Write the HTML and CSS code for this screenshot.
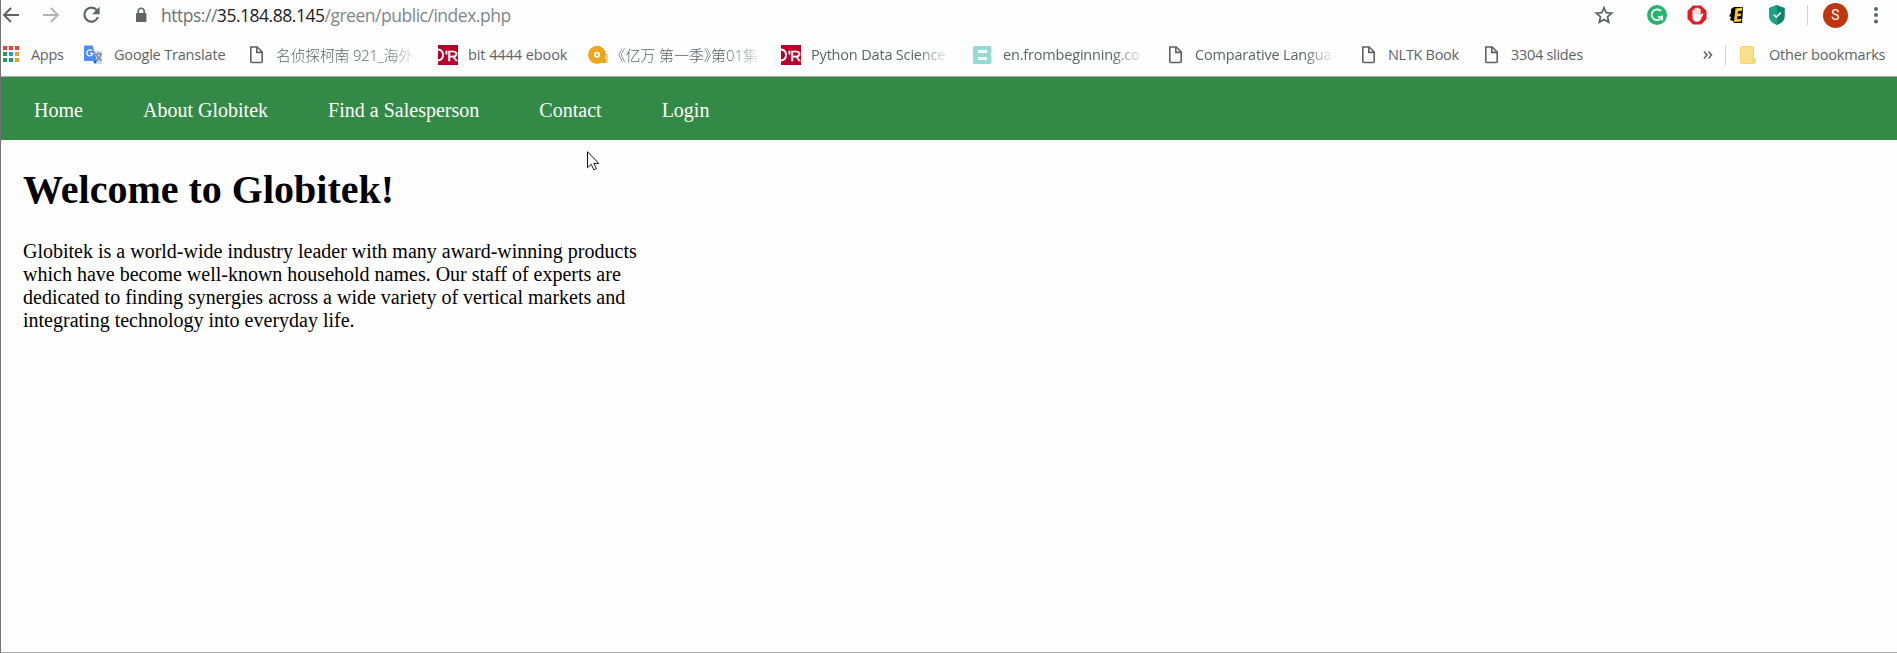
FILE: index.html
```html
<!DOCTYPE html>
<html lang="en">
<head>
<meta charset="utf-8">
<title>Globitek</title>
<link rel="stylesheet" href="styles.css">
</head>
<body>
<svg class="defs" width="0" height="0">
  <symbol id="doc" viewBox="0 0 20 20"><path d="M4.8 2h6.4l5 5v9.5q0 1-1 1H5.8q-1 0-1-1z" fill="none" stroke="#5f6062" stroke-width="1.6"/><path d="M10.8 2v5.4h5.4" fill="none" stroke="#5f6062" stroke-width="1.6"/></symbol>
</svg>
<div class="window">
  <header class="toolbar">
    <svg class="ic back" viewBox="0 0 20 20"><path d="M19 10H4M11 3L4 10l7 7" fill="none" stroke="#5f6368" stroke-width="2"/></svg>
    <svg class="ic forward" viewBox="0 0 20 20"><path d="M2 10h15M10 3l7 7-7 7" fill="none" stroke="#b4b4b4" stroke-width="1.8"/></svg>
    <svg class="ic reload" viewBox="0 0 20 20"><path d="M15.9 5.3A7 7 0 1 0 17 12" fill="none" stroke="#5f6368" stroke-width="2.2"/><path d="M18.6 1.8v7.4h-7.4z" fill="#5f6368"/></svg>
    <svg class="ic lock" viewBox="0 0 20 20"><rect x="5" y="8" width="10.4" height="9" rx="1" fill="#5f6368"/><path d="M7.2 8.5V6.2a3 3 0 0 1 6 0v2.3" fill="none" stroke="#5f6368" stroke-width="1.6"/></svg>
    <div class="url"><span class="scheme">https://</span><span class="host">35.184.88.145</span><span class="path">/green/public/index.php</span></div>
    <svg class="ic star" viewBox="0 0 20 20"><path d="M10 2.6l2.1 5 5.6.5-4.2 3.7 1.2 5.4L10 14.4l-4.7 2.8 1.2-5.4-4.2-3.7 5.6-.5z" fill="none" stroke="#5f6368" stroke-width="1.7"/></svg>
    <div class="extensions">
      <svg class="ic" viewBox="0 0 20 20"><circle cx="10" cy="10" r="10" fill="#25b571"/><path d="M14.2 6.2A5.4 5.4 0 1 0 15 12h-4.2M15.2 10.6v4.8" fill="none" stroke="#fff" stroke-width="1.7"/></svg>
      <svg class="ic" viewBox="0 0 20 20"><path d="M6 .5h8L19.5 6v8L14 19.5H6L.5 14V6z" fill="#e61b23"/><path d="M5.500 10V5.300q.9-1.200 1.900 0V3.600q1-1.200 2.100 0V3q1-1.200 2.100 0v1q1-1 2 0v6l1.300-1.400q1.300-.4 1.400.6l-2.500 5.200q-1 2.400-3.700 2.400-4.600 0-4.600-4.200z" fill="#fff"/><path d="M7.500 5v4.500M9.500 4v5M11.600 4.500v5" stroke="#e88" stroke-width=".4"/></svg>
      <svg class="ic" viewBox="0 0 20 20"><path d="M7 2h9v3l-1 13H7l-1-2-3-1 1-3-2-1 2-3V4z" fill="#080808"/><path d="M8.500 3.500l7-1-.5 3.300-4 .4-.3 2.600 3.300-.3-.3 2.400-3.300.3-.3 3 4.300-.4-.4 2.700-7 .600z" fill="#f6cd2c"/></svg>
      <svg class="ic" viewBox="0 0 20 20"><path d="M10 0l7.800 3v8q0 6-7.800 9-7.800-3-7.800-9V3z" fill="#11826f"/><path d="M10 0v20q-7.800-3-7.800-9V3z" fill="#18a587"/><path d="M6.800 9.800l2.400 2.400 4.500-4.600" fill="none" stroke="#fff" stroke-width="1.600"/></svg>
    </div>
    <span class="divider"></span>
    <span class="avatar">S</span>
    <svg class="ic menu" viewBox="0 0 20 20"><g fill="#5f6368"><circle cx="10" cy="4" r="2"/><circle cx="10" cy="10" r="2"/><circle cx="10" cy="16.400" r="2"/></g></svg>
  </header>

  <nav class="bookmarks">
    <a class="bm"><svg class="ic" viewBox="0 0 20 20"><g fill="#ef4136"><path d="M2 1h4v4H2zM8 1h4v4H8zM14 1h4v4h-4z"/></g><path d="M2 7h4v4H2zM2 13h4v4H2z" fill="#1da05c"/><path d="M8 7h4v4H8z" fill="#3b8bf0"/><path d="M14 7h4v4h-4zM14 13h4v4h-4z" fill="#eba51c"/><path d="M8 13h4v4H8z" fill="#1da05c"/></svg><span class="t apps">Apps</span></a>
    <a class="bm"><svg class="ic" viewBox="0 0 20 20"><path d="M8 6h11v13h-7z" fill="#d7d9dc"/><path d="M12 9h7M15.500 7.500V9M13 16q4-2 5-7M13.500 10q1 3 5 5.500" fill="none" stroke="#607d8b" stroke-width="1.200"/><path d="M2 .5h7.500L14 16H2q-1 0-1-1V1.500q0-1 1-1z" fill="#4a8cf6"/><path d="M10 16h4l-2 3z" fill="#2f55c0"/><path d="M9 5.800a3 3 0 1 0 .8 2.600H7.200" fill="none" stroke="#fff" stroke-width="1.300"/></svg><span class="t translate">Google Translate</span></a>
    <a class="bm"><svg class="ic"><use href="#doc"/></svg><span class="t conan fade">名侦探柯南 921_海外</span></a>
    <a class="bm"><span class="oreilly"><svg class="arc" viewBox="0 0 7 20"><path d="M0 4.500q5 .5 5 5.500t-5 5.500" fill="none" stroke="#fff" stroke-width="1.900"/></svg>'R</span><span class="t ebook">bit 4444 ebook</span></a>
    <a class="bm"><svg class="ic" viewBox="0 0 20 20"><circle cx="9" cy="9.800" r="6" fill="none" stroke="#eda71c" stroke-width="6"/><circle cx="9" cy="9.800" r="1.200" fill="#eda71c"/><path d="M13 14h5v4h-5zM18.500 9h1v9h-1z" fill="#eda71c"/></svg><span class="t billions fade">《亿万 第一季》第01集</span></a>
    <a class="bm"><span class="oreilly"><svg class="arc" viewBox="0 0 7 20"><path d="M0 4.500q5 .5 5 5.500t-5 5.500" fill="none" stroke="#fff" stroke-width="1.900"/></svg>'R</span><span class="t python fade">Python Data Science</span></a>
    <a class="bm"><svg class="ic" viewBox="0 0 20 20"><path d="M2 1h16q1.500 0 1.500 1.500v5.500l-1 2 1 2v5.500q0 1.500-1.500 1.500H2q-1 0-1-1v-16q0-1 1-1z" fill="#96dad6"/><path d="M6 5h9v3H6zM6 12h9v3H6z" fill="#fff"/></svg><span class="t beginning fade">en.frombeginning.co</span></a>
    <a class="bm"><svg class="ic"><use href="#doc"/></svg><span class="t comparative fade">Comparative Langua</span></a>
    <a class="bm"><svg class="ic"><use href="#doc"/></svg><span class="t nltk">NLTK Book</span></a>
    <a class="bm"><svg class="ic"><use href="#doc"/></svg><span class="t slides">3304 slides</span></a>
    <svg class="more" viewBox="0 0 10 10"><path d="M1 1.500L4 5 1 8.500M5.500 1.500l3 3.500-3 3.500" fill="none" stroke="#5f6368" stroke-width="1.500"/></svg>
    <span class="divider"></span>
    <a class="bm"><svg class="ic" viewBox="0 0 20 20"><path d="M3.500 1.500h11q1 0 1 1V13q2.500 0 2 3 0 2.500-2 2.500h-12q-1 0-1-1v-15q0-1 1-1z" fill="#f9e08c" stroke="#f8d568"/><path d="M15.500 13q-2 .5-1.500 2.500t2 2" fill="none" stroke="#f3cb51"/></svg><span class="t other">Other bookmarks</span></a>
  </nav>

  <nav class="site-nav">
    <a>Home</a><a>About Globitek</a><a>Find a Salesperson</a><a>Contact</a><a>Login</a>
  </nav>
  <main class="content">
    <h1>Welcome to Globitek!</h1>
    <p>Globitek is a world-wide industry leader with many award-winning products which have become well-known household names. Our staff of experts are dedicated to finding synergies across a wide variety of vertical markets and integrating technology into everyday life.</p>
  </main>
  <svg class="cursor" viewBox="0 0 13 20"><path d="M.5.7v16l3.700-3.400 2.700 5.500 2.500-1.200-2.600-5.200h5z" fill="#fff" stroke="#15151f"/></svg>
</div>
</body>
</html>
```

FILE: styles.css
```css
* { box-sizing: border-box; }
body { margin: 0; background: #fefefe; }
.defs { position: absolute; }
.window {
  position: relative;
  height: 653px;
  border-left: 1px solid #737373;
  border-bottom: 1px solid #a9a9a9;
  overflow: hidden;
}
.ic { width: 20px; height: 20px; flex: none; display: block; }

.toolbar {
  height: 30px;
  display: flex;
  align-items: center;
  font-family: "Open Sans", "Noto Sans", sans-serif;
}
.back { margin-left: -1px; }
.forward { margin-left: 21px; }
.reload { margin-left: 20px; }
.lock { margin-left: 30px; }
.url {
  flex: none;
  margin-left: 10px;
  width: 1432px;
  font-size: 17.5px;
  letter-spacing: -.48px;
  line-height: 30px;
  color: #80868b;
  white-space: nowrap;
}
.scheme { color: #6b7075; }
.host { color: #202124; }
.star { margin-left: 1px; }
.extensions { display: flex; gap: 20px; margin-left: 33px; }
.divider { width: 1px; height: 20px; background: #d2d3d5; flex: none; }
.toolbar .divider { margin-left: 20px; }
.avatar {
  margin-left: 15px;
  width: 25px;
  height: 25px;
  border-radius: 50%;
  background: #bf360c;
  color: #fff;
  font: 14px/25px Roboto, sans-serif;
  text-align: center;
  flex: none;
}
.menu { margin-left: 18px; }

.bookmarks {
  height: 46px;
  display: grid;
  grid-template-columns: 82px 163px 192px 150px 193px 191px 193px 193px 123px 222px 22px 13px 158px;
  align-items: center;
  padding-top: 4px;
  font-family: "Open Sans", "Noto Sans CJK SC", sans-serif;
  font-size: 14.5px;
  letter-spacing: -.18px;
  color: #5f6368;
}
.bm { display: flex; align-items: center; gap: 10px; white-space: nowrap; }
.t { line-height: 22px; }
.translate, .other, .beginning { padding-left: 1px; }
.apps, .nltk, .slides { letter-spacing: -.3px; }
.ebook { letter-spacing: -.08px; }
.conan { font-size: 14.8px; letter-spacing: -.15px; font-weight: 300; }
.billions { font-size: 15px; letter-spacing: -.1px; font-weight: 300; font-feature-settings: "halt"; }
.fade {
  -webkit-mask-image: linear-gradient(to right, #000 calc(100% - 28px), rgba(0, 0, 0, .15));
  mask-image: linear-gradient(to right, #000 calc(100% - 28px), rgba(0, 0, 0, .15));
}
.oreilly {
  width: 20px;
  height: 20px;
  display: flex;
  background: #b9002d;
  color: #fff;
  font: 15px/21px "Liberation Sans", sans-serif;
  letter-spacing: -.6px;
  -webkit-text-stroke: .4px #fff;
}
.arc { width: 7px; height: 20px; flex: none; }
.more { width: 10px; height: 10px; }
.site-nav {
  height: 64px;
  border-top: 1px solid #aaa;
  background: #338a46;
  display: flex;
  gap: 60px;
  padding-left: 33px;
  font: 20px/66px "Liberation Serif", serif;
  letter-spacing: .01px;
  color: #fff;
}
.content {
  padding: 27px 22px 0;
  font: 20px/23px "Liberation Serif", serif;
  color: #000;
}
.content h1 { margin: 0; font-size: 40px; line-height: 46px; }
.content p { margin: 27px 0 0; width: 625px; }
.cursor { position: absolute; left: 586px; top: 151px; width: 13px; height: 20px; }
```
